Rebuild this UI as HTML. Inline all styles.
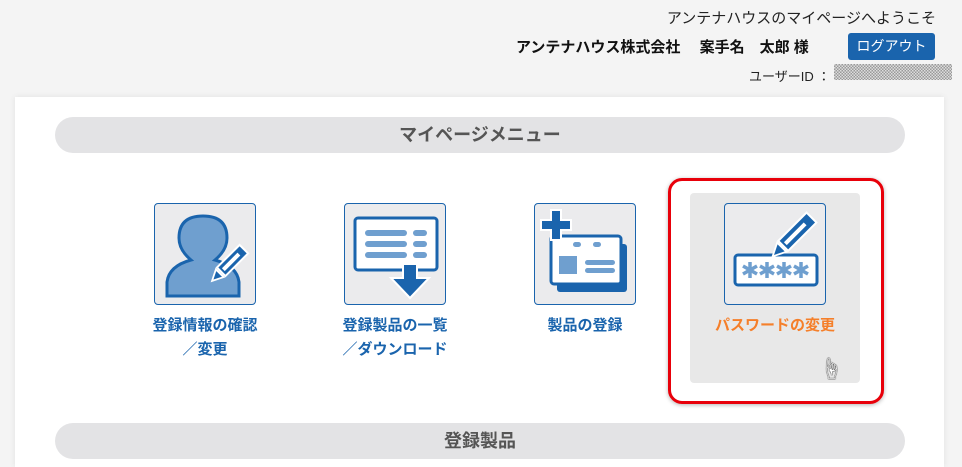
<!DOCTYPE html>
<html><head><meta charset="utf-8"><style>
*{margin:0;padding:0;box-sizing:border-box}
body{width:962px;height:460px;overflow:hidden;background:#f4f4f4;font-family:"Liberation Sans","Noto Sans CJK JP",sans-serif;position:relative}
.a{position:absolute}
.ic{position:absolute;width:102px;height:102px;border:1.5px solid #1a64ad;border-radius:4px;background:#ebebed}
.lb{position:absolute;width:200px;text-align:center;font-weight:bold;font-size:15px;color:#1a64ad;line-height:24px}
.bar{position:absolute;left:55px;width:850px;height:36px;border-radius:18px;background:#e3e3e5;text-align:center;line-height:36px;font-weight:bold;font-size:18px;color:#555}
</style></head><body>
<div class="a" style="right:26px;top:7px;font-size:15px;color:#222">アンテナハウスのマイページへようこそ</div>
<div class="a" style="left:516px;top:36px;font-size:15px;font-weight:bold;color:#111">アンテナハウス株式会社　 案手名　太郎 様</div>
<div class="a" style="left:848px;top:33px;width:87px;height:27px;background:#1a64ad;border-radius:3px;color:#fff;font-size:14px;text-align:center;line-height:27px">ログアウト</div>
<div class="a" style="left:749px;top:66px;font-size:13px;color:#222">ユーザーID ：</div>
<div class="a" style="left:834px;top:64px;width:118px;height:16px;background:repeating-conic-gradient(#999 0 25%,#ddd 0 50%) 0 0/3px 3px"></div>
<div class="a" style="left:15px;top:97px;width:929px;height:370px;background:#fff;box-shadow:0 0 6px rgba(0,0,0,.08)"></div>
<div class="bar" style="top:117px">マイページメニュー</div>
<div class="bar" style="top:423px">登録製品</div>

<div class="a" style="left:690px;top:193px;width:170px;height:190px;background:#e8e8e8;border-radius:4px"></div>
<div class="a" style="left:668px;top:178px;width:216px;height:226px;border:3px solid #e8000a;border-radius:14px;box-shadow:0 1px 4px rgba(0,0,0,.3)"></div>

<div class="ic" style="left:154px;top:203px"><svg width="100" height="100" viewBox="0 0 100 100">
<path d="M12 92 L12 78 Q14 62 36 56 Q24 46 24 34 Q24 12 48 12 Q72 12 72 34 Q72 46 60 56 Q82 62 84 78 L84 92 Z" fill="#6f9fcf" stroke="#1a64ad" stroke-width="3"/>
<g transform="translate(74 60) rotate(45)"><rect x="-7" y="-22" width="14" height="34" fill="#fff"/><rect x="-5" y="-20" width="10" height="30" fill="#1a64ad"/><rect x="-2" y="-14" width="4" height="22" fill="#fff"/><path d="M-7 12 L7 12 L0 26 Z" fill="#fff"/><path d="M-4 14 L4 14 L0 22Z" fill="#1a64ad"/></g></svg></div>
<div class="lb" style="left:105px;top:314px">登録情報の確認<br>／変更</div>

<div class="ic" style="left:344px;top:203px"><svg width="100" height="100" viewBox="0 0 100 100">
<rect x="10" y="14" width="82" height="52" rx="3" fill="#fff" stroke="#1a64ad" stroke-width="3"/>
<g fill="#6f9fcf"><rect x="20" y="26" width="42" height="6" rx="3"/><rect x="68" y="26" width="14" height="6" rx="3"/><rect x="20" y="37" width="42" height="6" rx="3"/><rect x="68" y="37" width="14" height="6" rx="3"/><rect x="20" y="48" width="42" height="6" rx="3"/><rect x="68" y="48" width="14" height="6" rx="3"/></g>
<path d="M58 60 L72 60 L72 74 L84 74 L65 94 L46 74 L58 74Z" fill="#1a64ad" stroke="#fff" stroke-width="2"/></svg></div>
<div class="lb" style="left:295px;top:314px">登録製品の一覧<br>／ダウンロード</div>

<div class="ic" style="left:534px;top:203px"><svg width="100" height="100" viewBox="0 0 100 100">
<rect x="22" y="40" width="70" height="48" rx="3" fill="#1a64ad"/>
<rect x="16" y="32" width="70" height="48" rx="3" fill="#fff" stroke="#1a64ad" stroke-width="3"/>
<rect x="24" y="52" width="18" height="18" fill="#6f9fcf"/><rect x="50" y="56" width="30" height="5" rx="2.5" fill="#6f9fcf"/><rect x="50" y="64" width="30" height="5" rx="2.5" fill="#6f9fcf"/>
<rect x="38" y="38" width="8" height="5" rx="2.5" fill="#6f9fcf"/><rect x="58" y="38" width="8" height="5" rx="2.5" fill="#6f9fcf"/>
<path d="M16 6 H26 V16 H36 V26 H26 V36 H16 V26 H6 V16 H16Z" fill="#1a64ad" stroke="#fff" stroke-width="2"/></svg></div>
<div class="lb" style="left:485px;top:314px">製品の登録</div>

<div class="ic" style="left:724px;top:203px"><svg width="100" height="100" viewBox="0 0 100 100">
<rect x="10" y="51" width="82" height="30" rx="3" fill="#fff" stroke="#1a64ad" stroke-width="3"/>
<defs><g id="st" stroke="#6f9fcf" stroke-width="3.5" stroke-linecap="butt"><line x1="0" y1="-8" x2="0" y2="8"/><line x1="-7" y1="-4" x2="7" y2="4"/><line x1="-7" y1="4" x2="7" y2="-4"/></g></defs>
<use href="#st" x="25" y="66"/><use href="#st" x="42" y="66"/><use href="#st" x="59" y="66"/><use href="#st" x="76" y="66"/>
<g transform="translate(66 34) rotate(45)"><rect x="-8" y="-30" width="16" height="42" fill="#fff"/><rect x="-6" y="-28" width="12" height="38" fill="#1a64ad"/><rect x="-2" y="-20" width="4" height="28" fill="#fff"/><path d="M-8 12 L8 12 L0 28Z" fill="#fff"/><path d="M-5 14 L5 14 L0 24Z" fill="#1a64ad"/></g></svg></div>
<div class="lb" style="left:675px;top:314px;color:#f57f2a">パスワードの変更</div>
<div class="a" style="left:820px;top:352px;font-size:22px;color:#fff;text-shadow:0 0 1px #000,0 0 1px #000">☝</div>
</body></html>
